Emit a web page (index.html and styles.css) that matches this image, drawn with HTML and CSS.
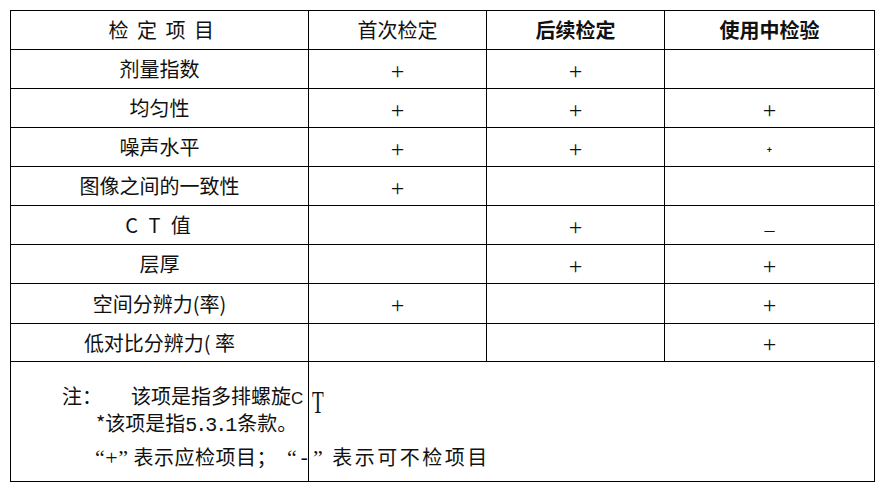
FILE: index.html
```html
<!DOCTYPE html>
<html lang="zh">
<head>
<meta charset="utf-8">
<title>检定项目</title>
<link rel="stylesheet" href="styles.css">
</head>
<body>
<table class="grid">
  <colgroup>
    <col class="c1"><col class="c2"><col class="c3"><col class="c4">
  </colgroup>
  <tr class="row head">
    <td class="spaced">检定项目</td>
    <td>首次检定</td>
    <td class="bold">后续检定</td>
    <td class="bold">使用中检验</td>
  </tr>
  <tr class="row"><td>剂量指数</td><td class="mark">+</td><td class="mark">+</td><td></td></tr>
  <tr class="row"><td>均匀性</td><td class="mark">+</td><td class="mark">+</td><td class="mark">+</td></tr>
  <tr class="row"><td>噪声水平</td><td class="mark">+</td><td class="mark">+</td><td class="mark tiny">+</td></tr>
  <tr class="row"><td>图像之间的一致性</td><td class="mark">+</td><td></td><td></td></tr>
  <tr class="row"><td class="ct">C T 值</td><td></td><td class="mark">+</td><td class="mark dash">–</td></tr>
  <tr class="row"><td>层厚</td><td></td><td class="mark">+</td><td class="mark">+</td></tr>
  <tr class="row tall"><td>空间分辨力(率)</td><td class="mark">+</td><td></td><td class="mark">+</td></tr>
  <tr class="row short"><td>低对比分辨力( 率</td><td></td><td></td><td class="mark">+</td></tr>
  <tr class="notes">
    <td class="note-left">
      <div class="nl nl1"><span class="lbl">注：</span><span>该项是指多排螺旋<span class="lat">C</span></span></div>
      <div class="nl nl2">*该项是指<span class="mono">5.3.1</span>条款。</div>
      <div class="nl nl3"><span class="q">“+”</span> 表示应检项目；<span class="q q2">“</span><span class="hy">-</span></div>
    </td>
    <td class="note-right" colspan="3">
      <div class="tmark"><span>T</span></div>
      <div class="nr2"><span class="q">”</span> 表示可不检项目</div>
    </td>
  </tr>
</table>
</body>
</html>
```

FILE: styles.css
```css
html, body {
  margin: 0;
  padding: 0;
  background: #fff;
}
body {
  font-family: "Noto Sans CJK SC", "Noto Sans", sans-serif;
  color: #111;
  font-size: 20px;
}
.grid {
  border-collapse: collapse;
  table-layout: fixed;
  width: 864px;
  margin: 10px 0 0 10px;
}
.c1 { width: 298px; }
.c2 { width: 178px; }
.c3 { width: 178px; }
.c4 { width: 210px; }
.grid td {
  border: 1px solid #000;
  padding: 0;
  text-align: center;
  vertical-align: middle;
  line-height: 26px;
}
.row { height: 39px; }
.row.tall { height: 40px; }
.row.short { height: 38px; }
.spaced {
  letter-spacing: 8.5px;
  padding-left: 12px !important;
}
.bold { font-weight: 700; }
.ct { letter-spacing: 3px; }
.mark {
  font-family: "Liberation Serif", serif;
  font-size: 24px;
  padding-top: 3px !important;
}
.mark.tiny {
  font-size: 9px;
  font-weight: 700;
  font-family: "Liberation Sans", sans-serif;
  padding-top: 6px !important;
}
.mark.dash {
  font-size: 20px;
  padding-top: 10px !important;
}
.notes { height: 120px; }
.notes td { vertical-align: top; text-align: left; }
.note-left { padding-top: 20px !important; }
.nl {
  height: 28px;
  line-height: 28px;
  white-space: nowrap;
  overflow: visible;
}
.nl1 { padding-left: 51px; height: 27px; }
.lbl { margin-right: 29px; }
.lat { font-family: "Liberation Sans", sans-serif; font-size: 17px; }
.nl2 { padding-left: 85px; }
.mono {
  font-family: "Liberation Mono", monospace;
  font-size: 20px;
  letter-spacing: -2px;
  margin-right: 2px;
}
.nl3 { padding-left: 84px; margin-top: 6px; letter-spacing: 0.5px; }
.q { font-family: "Liberation Serif", serif; font-size: 22px; }
.q2 { margin-left: 10px; }
.hy {
  font-family: "Liberation Mono", monospace;
  font-size: 20px;
  margin-left: 1px;
}
.note-right { padding: 20px 0 0 3px !important; }
.tmark { height: 42px; line-height: 42px; }
.tmark span {
  display: inline-block;
  font-family: "Liberation Serif", serif;
  font-size: 30px;
  transform: scale(0.64, 1.02);
  transform-origin: left center;
}
.nr2 {
  height: 28px;
  line-height: 28px;
  letter-spacing: 2.5px;
  padding-left: 1px;
  margin-top: 19px;
  white-space: nowrap;
}
```
